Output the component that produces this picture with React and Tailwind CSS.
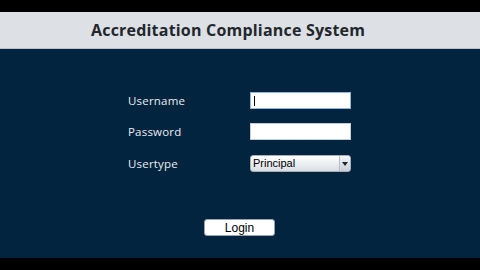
export default function App() {
  return (
    <div className="w-[480px] h-[270px] bg-black flex flex-col overflow-hidden" style={{ fontFamily: "'Open Sans', 'DejaVu Sans', sans-serif" }}>
      <div className="h-[12px] bg-black" />
      <div className="h-[37px] bg-[#dde1e6] border-b border-[#b9c0c8] flex items-center pl-[91px]">
        <h1 className="text-[16px] font-bold text-[#23272b] tracking-[0.2px]">Accreditation Compliance System</h1>
      </div>
      <div className="h-[209px] bg-[#03243f] flex flex-col">
        <div className="mt-[43px] ml-[128px] grid grid-cols-[122px_101px] gap-y-[14px] items-center">
          <span className="text-[11.5px] leading-[17px] text-[#e8ecf0] tracking-[0.2px]">Username</span>
          <div className="relative h-[17px]">
            <input
              className="block h-[17px] w-[101px] bg-white border border-[#8fb6dc] outline-none px-1 text-[11px]"
              defaultValue=""
            />
            <span className="absolute left-[4px] top-[4px] w-px h-[10px] bg-black" />
          </div>
          <span className="text-[11.5px] leading-[17px] text-[#e8ecf0] tracking-[0.2px]">Password</span>
          <input type="password" className="block h-[17px] w-[101px] bg-white border border-[#c4ccd4] outline-none px-1 text-[11px]" />
          <span className="mt-[1px] text-[11.5px] leading-[17px] text-[#e8ecf0] tracking-[0.2px]">Usertype</span>
          <div className="mt-[1px] h-[17px] w-[101px] rounded-[3px] border border-[#a7b0ba] bg-gradient-to-b from-white to-[#d9dee4] flex items-center">
            <span className="flex-1 pl-[2px] text-[11px] text-black leading-none" style={{ fontFamily: "'Liberation Sans', Arial, sans-serif" }}>Principal</span>
            <span className="w-[11px] h-full border-l border-[#b5bdc6] bg-gradient-to-b from-[#f4f6f8] to-[#c9d0d8] flex items-center justify-center rounded-r-[3px]">
              <svg width="6" height="4" viewBox="0 0 6 4"><path d="M0 0h6L3 4z" fill="#1c2530" /></svg>
            </span>
          </div>
        </div>
        <div className="mt-[47px] flex justify-center pr-[1px]">
          <button
            className="w-[71px] h-[17px] bg-white rounded-[3px] border border-[#9aa3ad] text-[12px] text-black flex items-center justify-center leading-none"
            style={{ fontFamily: "'Liberation Sans', Arial, sans-serif" }}
          >
            Login
          </button>
        </div>
      </div>
      <div className="flex-1 bg-black" />
    </div>
  );
}
